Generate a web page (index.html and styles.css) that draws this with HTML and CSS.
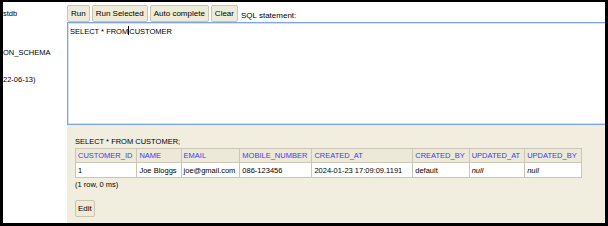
FILE: index.html
```
<!DOCTYPE html>
<html>
  <head>
    <link rel="stylesheet" href="styles.css">
    <title>H2 Console</title>
  </head>
  <body>
    <div class="frame">
      <div class="tree">
        <div class="tree-item first">stdb</div>
        <div class="tree-item second">ON_SCHEMA</div>
        <div class="tree-item third">22-06-13)</div>
      </div>
      <div class="main">
        <div class="toolbar">
          <button class="btn">Run</button>
          <button class="btn">Run Selected</button>
          <button class="btn">Auto complete</button>
          <button class="btn">Clear</button>
          <span class="label">SQL statement:</span>
        </div>
        <div class="sql-input">SELECT * FROM<span class="caret"></span>CUSTOMER</div>
        <div class="result">
          <div class="statement">SELECT * FROM CUSTOMER;</div>
          <table class="result-table">
            <tr>
              <th>CUSTOMER_ID</th>
              <th>NAME</th>
              <th>EMAIL</th>
              <th>MOBILE_NUMBER</th>
              <th>CREATED_AT</th>
              <th>CREATED_BY</th>
              <th>UPDATED_AT</th>
              <th>UPDATED_BY</th>
            </tr>
            <tr>
              <td>1</td>
              <td>Joe Bloggs</td>
              <td>joe@gmail.com</td>
              <td>086-123456</td>
              <td class="wide">2024-01-23 17:09:09.1191</td>
              <td>default</td>
              <td><i>null</i></td>
              <td><i>null</i></td>
            </tr>
          </table>
          <div class="summary">(1 row, 0 ms)</div>
          <button class="btn edit">Edit</button>
        </div>
      </div>
    </div>
  </body>
</html>
```

FILE: styles.css
```
body {
  margin: 0;
  background: #000;
  font-family: "Liberation Sans", Arial, sans-serif;
  font-size: 7.5px;
  color: #000;
}

.frame {
  margin: 2px 3px 0 3px;
  width: 602px;
  height: 221px;
  display: flex;
  overflow: hidden;
  background: #fff;
}

.tree {
  width: 64px;
  flex-shrink: 0;
  background: #fff;
  overflow: hidden;
  white-space: nowrap;
  color: #000;
}

.tree-item {
  line-height: 10px;
}

.tree-item.first {
  margin-top: 7px;
}

.tree-item.second {
  margin-top: 29px;
}

.tree-item.third {
  margin-top: 17px;
}

.main {
  flex: 1;
  display: flex;
  flex-direction: column;
  min-width: 0;
}

.toolbar {
  height: 20px;
  display: flex;
  align-items: flex-end;
  gap: 2px;
  background: #fff;
}

.btn {
  height: 17px;
  padding: 0 3px;
  background: #eeebd8;
  border: 1px solid #c9c5b0;
  border-radius: 2px;
  font-family: "Liberation Sans", Arial, sans-serif;
  font-size: 8px;
  color: #000;
  cursor: pointer;
}

.label {
  align-self: center;
  margin-top: 6px;
  margin-left: 1px;
  font-size: 8px;
}

.sql-input {
  height: 98px;
  width: 560px;
  border: 1px solid #7fa4e2;
  box-shadow: inset 0 0 0 1px #d3e0f6;
  padding: 3px 0 0 2px;
  background: #fff;
  line-height: 10px;
  white-space: nowrap;
}

.caret {
  display: inline-block;
  width: 1px;
  height: 9px;
  background: #000;
  vertical-align: -1px;
}

.result {
  flex: 1;
  background: #f1eedf;
  padding: 12px 0 0 8px;
}

.statement {
  line-height: 10px;
  margin-bottom: 1px;
}

.result-table {
  border-collapse: collapse;
  background: #fff;
  line-height: 9px;
}

.result-table th,
.result-table td {
  border: 1px solid #cbc7b4;
  padding: 2px 4px 2px 2px;
  text-align: left;
  white-space: nowrap;
}

.result-table th {
  background: #ece9d8;
  color: #3a3af2;
  font-weight: normal;
}

.result-table td {
  height: 10px;
}

.result-table td.wide {
  padding-right: 10px;
}

.summary {
  line-height: 10px;
  margin-top: 2px;
}

.btn.edit {
  margin-top: 10px;
  padding: 0 2px;
}
```
